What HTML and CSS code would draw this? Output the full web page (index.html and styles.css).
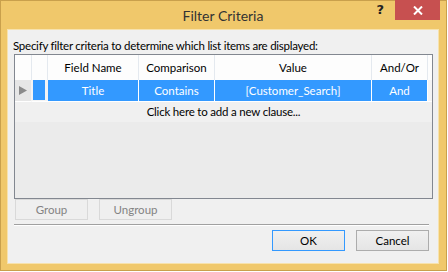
FILE: index.html
```html
<!DOCTYPE html>
<html lang="en">
<head>
  <meta charset="utf-8">
  <title>Filter Criteria</title>
  <link rel="stylesheet" href="styles.css">
</head>
<body>
  <div class="window">
    <div class="titlebar">
      <span></span>
      <span class="title">Filter Criteria</span>
      <div class="controls">
        <span class="help">?</span>
        <span class="close">
          <svg width="10" height="9" viewBox="0 0 10 9"><path d="M1 0.5 L9 8.5 M9 0.5 L1 8.5" stroke="#fff" stroke-width="2"/></svg>
        </span>
      </div>
    </div>

    <div class="client">
      <p class="lead">Specify filter criteria to determine which list items are displayed:</p>

      <div class="grid">
        <div class="row head">
          <div class="cell rh"></div>
          <div class="cell grp"></div>
          <div class="cell">Field Name</div>
          <div class="cell">Comparison</div>
          <div class="cell">Value</div>
          <div class="cell">And/Or</div>
          <div class="cell end"></div>
        </div>
        <div class="row sel">
          <div class="cell rh">
            <svg width="8" height="9" viewBox="0 0 8 9"><path d="M0 0 L8 4.5 L0 9 Z" fill="#8a8a8a"/></svg>
          </div>
          <div class="cell grp"><span></span></div>
          <div class="cell">Title</div>
          <div class="cell">Contains</div>
          <div class="cell">[Customer_Search]</div>
          <div class="cell">And</div>
          <div class="cell end"></div>
        </div>
        <div class="add-row">Click here to add a new clause...</div>
      </div>

      <div class="btn-row">
        <button class="btn" disabled>Group</button>
        <button class="btn" disabled>Ungroup</button>
      </div>

      <hr>

      <div class="btn-row right">
        <button class="btn default">OK</button>
        <button class="btn">Cancel</button>
      </div>
    </div>
  </div>
</body>
</html>
```

FILE: styles.css
```css
*, :after, :before { box-sizing: border-box; }
body {
  margin: 0;
  background: #fff;
  font-family: Lato, "Noto Sans", sans-serif;
  font-size: 11.5px;
  color: #000;
}
.window {
  width: 447px;
  height: 271px;
  border: 1px solid #c9a04c;
  background: #f0c86b;
  padding: 0 7px 6px 6px;
  display: flex;
  flex-direction: column;
}
.titlebar {
  height: 28px;
  flex: none;
  display: grid;
  grid-template-columns: 1fr auto 1fr;
  align-items: start;
}
.title {
  font-size: 14px;
  color: #333;
  padding-top: 5px;
  line-height: 20px;
}
.controls {
  display: flex;
  justify-content: flex-end;
  align-items: flex-start;
  margin-top: -1px;
  margin-right: -1px;
}
.help {
  font-family: "DejaVu Sans", sans-serif;
  font-weight: bold;
  font-size: 13px;
  color: #222;
  line-height: 20px;
  margin-right: 11px;
}
.close {
  width: 45px;
  height: 20px;
  background: #c75050;
  display: flex;
  align-items: center;
  justify-content: center;
}
.client {
  flex: 1;
  background: #f0f0f0;
  border: 1px solid #f7e2ad;
  padding: 8px 5px 0 6px;
  display: flex;
  flex-direction: column;
}
.lead {
  flex: none;
  margin: 0 0 0 -1px;
  line-height: 15px;
  height: 16px;
  letter-spacing: -0.25px;
}
.grid {
  height: 145px;
  flex: none;
  border: 1px solid #828790;
  background: #ebebeb;
}
.row {
  display: grid;
  grid-template-columns: 17px 16px 91px 76px 157px 56px 1fr;
}
.cell {
  display: flex;
  align-items: center;
  justify-content: center;
  white-space: nowrap;
}
.head {
  height: 25px;
  background: #fdfdfd;
}
.head .cell { border-right: 1px solid #e4e9ef; }
.head .cell.end { border-right: 0; }
.sel {
  height: 21px;
  background: #f4f4f4;
}
.sel .cell {
  background: #3399ff;
  color: #fff;
  border-right: 1px solid #fff;
  border-bottom: 1px solid #fff;
}
.sel .cell.rh {
  background: #e6e6e6;
  border-right: 1px solid #f4f4f4;
  justify-content: flex-start;
  padding-left: 4px;
}
.sel .cell.grp {
  background: #f4f4f4;
  padding: 0 3px 1px 0;
  border-right: 0;
}
.sel .cell.grp span {
  display: block;
  width: 12px;
  height: 20px;
  background: #3399ff;
}
.sel .cell.end {
  background: #f4f4f4;
  border-right: 0;
}
.add-row {
  height: 21px;
  background: #f0f0f0;
  display: flex;
  align-items: center;
  justify-content: center;
  letter-spacing: -0.2px;
}
.btn-row {
  display: flex;
  flex: none;
  gap: 11px;
  margin-left: 1px;
}
.btn-row.right {
  justify-content: flex-end;
  margin-right: 4px;
}
.btn {
  width: 73px;
  height: 21px;
  font-family: inherit;
  font-size: 11.5px;
  border: 1px solid #acacac;
  background: linear-gradient(#f0f0f0, #e5e5e5);
  color: #000;
  padding: 0;
}
.btn:disabled {
  border-color: #d9d9d9;
  background: #efefef;
  color: #838383;
}
.btn.default { border-color: #3399ff; }
.btn-row:first-of-type { margin-top: 5px; }
hr {
  flex: none;
  margin: 4px 4px 4px 0;
  border: 0;
  border-top: 1px solid #a0a0a0;
  border-bottom: 1px solid #fff;
}
```
